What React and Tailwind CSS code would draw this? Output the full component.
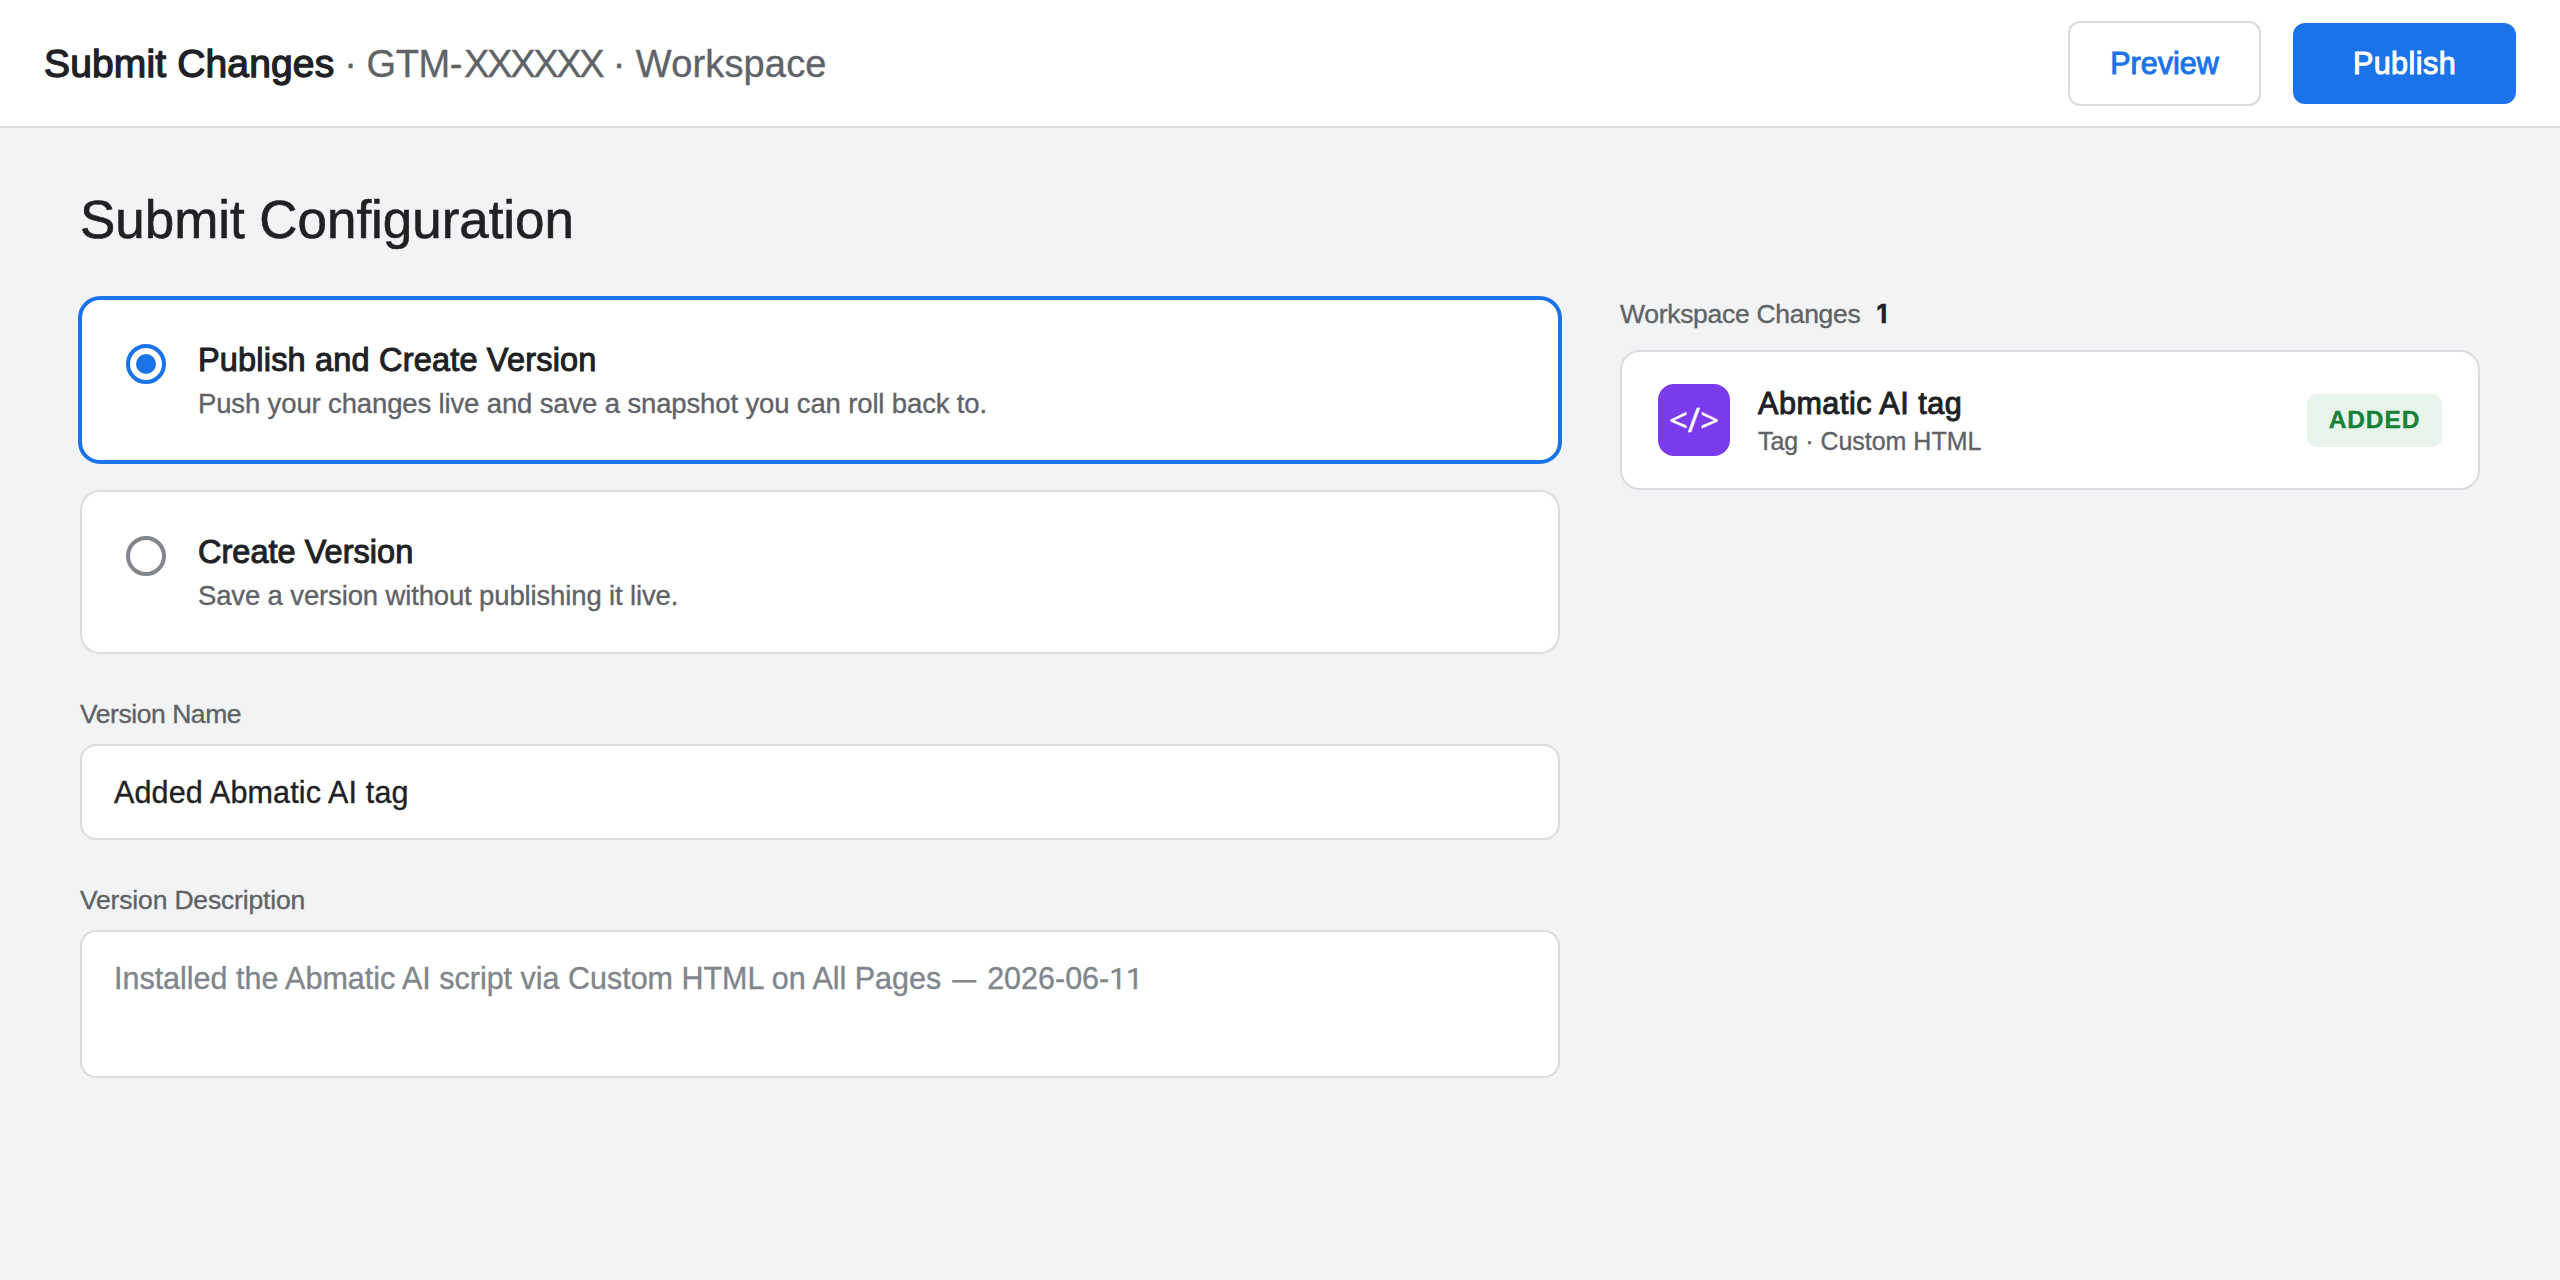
const options = [
  {
    id: "publish",
    title: "Publish and Create Version",
    text: "Push your changes live and save a snapshot you can roll back to.",
    selected: true,
    spacing: "tracking-[0.18px]",
  },
  {
    id: "create",
    title: "Create Version",
    text: "Save a version without publishing it live.",
    selected: false,
    spacing: "tracking-[0.02px]",
  },
];

const Header = () => {
  return (
    <header className="flex h-32 items-center justify-between border-b-2 border-[#dadce0] bg-white px-11">
      <p className="whitespace-pre pt-0.5 text-[38px] text-[#5f6368]">
        <span className="text-[39px] tracking-[0.14px] text-[#202124] [-webkit-text-stroke:1.3px_#202124]">
          Submit Changes
        </span>
        <span className="tracking-[-0.5px]"> · </span>
        <span className="tracking-[-0.4px]">GTM</span>
        <span className="tracking-[1.6px]">-</span>
        <span className="tracking-[-2.3px]">XXXXXX</span>
        <span className="tracking-[-0.1px]"> · </span>
        <span className="tracking-[0.15px]">Workspace</span>
      </p>
      <div className="flex items-center gap-8">
        <button
          type="button"
          className="h-[85px] w-[193px] rounded-xl border-2 border-[#dadce0] bg-white pt-0.5 text-[30.5px] text-[#1a73e8] [-webkit-text-stroke:1px_#1a73e8]"
        >
          Preview
        </button>
        <button
          type="button"
          className="h-[81px] w-[223px] rounded-xl bg-[#1a73e8] pt-0.5 text-[30.5px] tracking-[0.45px] text-white [-webkit-text-stroke:1px_#fff]"
        >
          Publish
        </button>
      </div>
    </header>
  );
};

const Radio = ({ selected }) => {
  return (
    <span
      className={`mt-1 flex size-10 shrink-0 items-center justify-center rounded-full border-4 ${
        selected ? "border-[#1a73e8]" : "border-[#80868b]"
      }`}
    >
      {selected && <span className="size-5 rounded-full bg-[#1a73e8]" />}
    </span>
  );
};

const OptionCard = ({ option }) => {
  return (
    <div
      className={`flex h-[164px] gap-8 rounded-[20px] border-2 bg-white px-11 py-10 ${
        option.selected
          ? "border-[#1a73e8] shadow-[0_0_0_2px_#1a73e8]"
          : "border-[#dadce0]"
      }`}
    >
      <Radio selected={option.selected} />
      <div className="pt-px">
        <h2
          className={`text-[32.5px] leading-[38px] text-[#202124] [-webkit-text-stroke:1px_#202124] ${option.spacing}`}
        >
          {option.title}
        </h2>
        <p className="mt-2 text-[27.5px] leading-[34px] tracking-[-0.14px] text-[#5f6368]">
          {option.text}
        </p>
      </div>
    </div>
  );
};

const WorkspaceChanges = () => {
  return (
    <aside className="w-[860px]">
      <p className="mb-5 text-[26.5px] leading-8 tracking-[-0.3px] text-[#5f6368]">
        Workspace Changes
        <span className="ml-4 font-['Inter'] text-[25px] font-bold text-[#202124]">
          1
        </span>
      </p>
      <div className="flex h-[140px] items-center rounded-[20px] border-2 border-[#dadce0] bg-white px-9">
        <div className="flex size-[72px] items-center justify-center rounded-2xl bg-[#7c3aed] font-['Noto_Sans'] text-[33px] text-white">
          {"</>"}
        </div>
        <div className="ml-7 flex-1">
          <h3 className="text-[30.5px] leading-[38px] tracking-[0.55px] text-[#202124] [-webkit-text-stroke:1px_#202124]">
            Abmatic AI tag
          </h3>
          <p className="mt-1 text-[25px] leading-[30px] tracking-[-0.02px] text-[#5f6368]">
            Tag · Custom HTML
          </p>
        </div>
        <span className="flex h-[53px] w-[135px] items-center justify-center rounded-[10px] bg-[#e6f4ea] text-[24.5px] font-bold tracking-[0.9px] text-[#188038]">
          ADDED
        </span>
      </div>
    </aside>
  );
};

const App = () => {
  return (
    <div className="min-h-screen bg-[#f1f3f4] font-['Liberation_Sans',Arial,sans-serif] [-webkit-text-stroke:0.35px]">
      <Header />
      <main className="px-20 pt-[62px]">
        <h1 className="mb-12 text-[53px] leading-[60px] tracking-[-0.05px] text-[#202124] [-webkit-text-stroke:0.6px]">
          Submit Configuration
        </h1>
        <div className="flex gap-[60px]">
          <section className="w-[1480px]">
            <div className="flex flex-col gap-7">
              {options.map((option) => (
                <OptionCard key={option.id} option={option} />
              ))}
            </div>

            <p className="mt-11 mb-3.5 text-[26.5px] leading-8 tracking-[-0.45px] text-[#5f6368]">
              Version Name
            </p>
            <div className="flex h-24 items-center rounded-2xl border-2 border-[#dadce0] bg-white px-8 pt-0.5 text-[30.5px] tracking-[0.15px] text-[#202124]">
              Added Abmatic AI tag
            </div>

            <p className="mt-11 mb-3.5 text-[26.5px] leading-8 tracking-[-0.17px] text-[#5f6368]">
              Version Description
            </p>
            <div className="h-[148px] rounded-2xl border-2 border-[#dadce0] bg-white px-8 py-7 text-[30.5px] leading-9 tracking-[-0.01px] text-[#80868b]">
              Installed the Abmatic AI script via Custom HTML on All Pages{" "}
              <span className="mx-[3px] align-[2px] text-[23px] leading-none [-webkit-text-stroke:1px_#80868b]">
                —
              </span>{" "}
              2026-06-
              <span className="font-['Roboto'] text-[30px]">11</span>
            </div>
          </section>
          <WorkspaceChanges />
        </div>
      </main>
    </div>
  );
};

export default App;
